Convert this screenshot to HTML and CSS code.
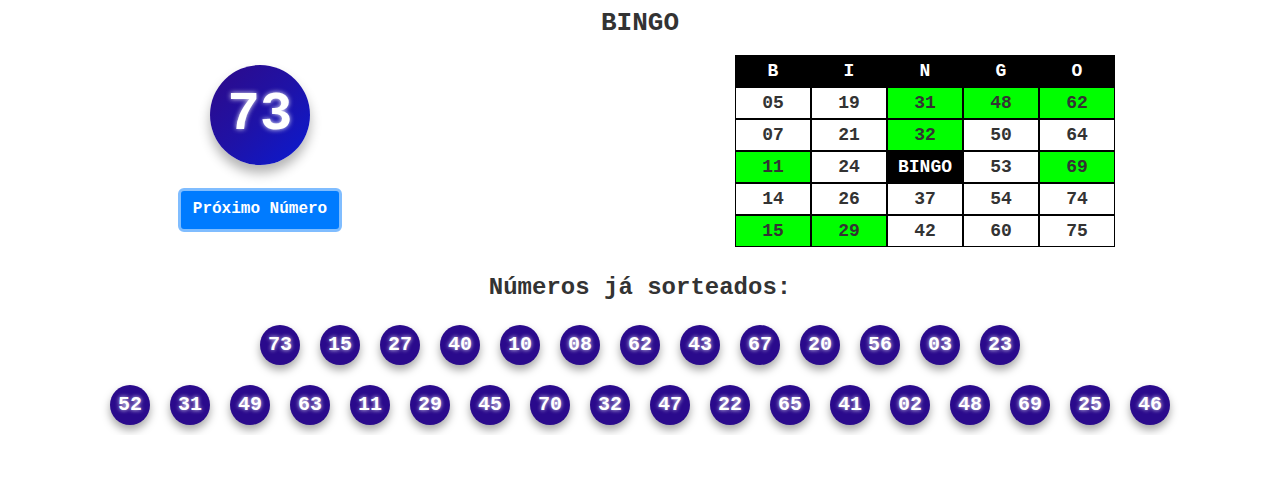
FILE: index.html
```html
<!DOCTYPE html>
<html lang="pt">
<head>
<meta charset="utf-8">
<title>Bingo</title>
<link rel="stylesheet" href="styles.css">
</head>
<body>
<h1 class="title">BINGO</h1>
<div class="top">
  <div class="draw">
    <div class="big-ball">73</div>
    <button class="next-btn">Próximo Número</button>
  </div>
  <table class="card">
    <thead>
      <tr><th>B</th><th>I</th><th>N</th><th>G</th><th>O</th></tr>
    </thead>
    <tbody>
      <tr><td>05</td><td>19</td><td class="hit">31</td><td class="hit">48</td><td class="hit">62</td></tr>
      <tr><td>07</td><td>21</td><td class="hit">32</td><td>50</td><td>64</td></tr>
      <tr><td class="hit">11</td><td>24</td><td class="free">BINGO</td><td>53</td><td class="hit">69</td></tr>
      <tr><td>14</td><td>26</td><td>37</td><td>54</td><td>74</td></tr>
      <tr><td class="hit">15</td><td class="hit">29</td><td>42</td><td>60</td><td>75</td></tr>
    </tbody>
  </table>
</div>
<h2 class="subtitle">Números já sorteados:</h2>
<div class="drawn">
  <div class="row">
    <span class="ball">73</span><span class="ball">15</span><span class="ball">27</span><span class="ball">40</span><span class="ball">10</span><span class="ball">08</span><span class="ball">62</span><span class="ball">43</span><span class="ball">67</span><span class="ball">20</span><span class="ball">56</span><span class="ball">03</span><span class="ball">23</span>
  </div>
  <div class="row">
    <span class="ball">52</span><span class="ball">31</span><span class="ball">49</span><span class="ball">63</span><span class="ball">11</span><span class="ball">29</span><span class="ball">45</span><span class="ball">70</span><span class="ball">32</span><span class="ball">47</span><span class="ball">22</span><span class="ball">65</span><span class="ball">41</span><span class="ball">02</span><span class="ball">48</span><span class="ball">69</span><span class="ball">25</span><span class="ball">46</span>
  </div>
</div>
</body>
</html>
```
FILE: styles.css
```css
body {
  margin: 8px;
  padding-left: 2px;
  background: #fff;
  color: #333;
  font-family: "Liberation Mono", "Courier New", monospace;
  font-weight: bold;
}
.title {
  margin: 0 0 17px;
  font-size: 26px;
  line-height: 30px;
  text-align: center;
}
.top {
  display: flex;
  align-items: flex-start;
}
.draw {
  width: 200px;
  margin-left: 150px;
  padding-top: 10px;
  display: flex;
  flex-direction: column;
  align-items: center;
  gap: 23px;
}
.big-ball {
  width: 100px;
  height: 100px;
  border-radius: 50%;
  background: linear-gradient(135deg, #2e0a88 0%, #1f12a6 50%, #0a1ad2 100%);
  color: #fff;
  font-size: 54px;
  line-height: 100px;
  text-align: center;
  box-shadow: 0 8px 12px rgba(0,0,0,0.3);
  text-shadow: 0 0 5px rgba(255,255,255,0.9);
}
.next-btn {
  font-family: inherit;
  font-weight: bold;
  font-size: 16px;
  line-height: 19px;
  color: #fff;
  background: #007bff;
  border: 3px solid #80bdff;
  border-radius: 6px;
  padding: 9px 12px 10px;
  cursor: pointer;
}
.card {
  margin-left: 375px;
  border-collapse: separate;
  border-spacing: 0;
  font-size: 18px;
}
.card th,
.card td {
  width: 74px;
  height: 30px;
  padding: 0;
  border: 1px solid #000;
  text-align: center;
  line-height: 30px;
}
.card th {
  background: #000;
  color: #fff;
}
.card td { background: #fff; }
.card td.hit { background: #00ff00; }
.card td.free {
  background: #000;
  color: #fff;
}
.subtitle {
  margin: 27px 0 13px;
  font-size: 24px;
  line-height: 28px;
  text-align: center;
}
.drawn {
  display: flex;
  flex-direction: column;
  align-items: center;
}
.row {
  display: flex;
  justify-content: center;
}
.ball {
  width: 40px;
  height: 40px;
  margin: 10px;
  border-radius: 50%;
  background: #2a0a8c;
  color: #fff;
  font-size: 20px;
  line-height: 40px;
  text-align: center;
  box-shadow: 0 5px 8px rgba(0,0,0,0.35);
  text-shadow: 0 0 4px rgba(255,255,255,0.9);
}
```
